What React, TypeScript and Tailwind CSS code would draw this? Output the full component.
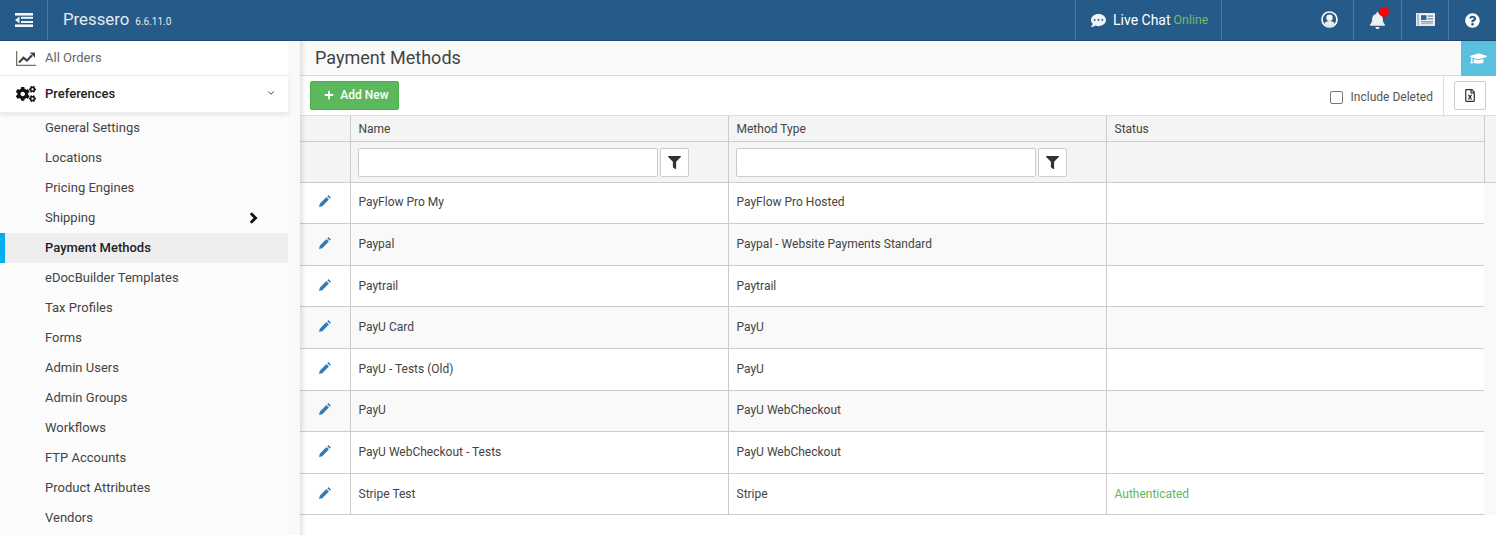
import React from "react";
import { ChevronDown } from "lucide-react";
import { FaCogs, FaCommentDots, FaBell, FaQuestionCircle, FaGraduationCap, FaPlus, FaFilter, FaRegFileExcel } from "react-icons/fa";

const menu = ["General Settings","Locations","Pricing Engines","Shipping","Payment Methods","eDocBuilder Templates","Tax Profiles","Forms","Admin Users","Admin Groups","Workflows","FTP Accounts","Product Attributes","Vendors"];
const rows = [
  { h: "h-[41px]", bg: "bg-white", t: "pb-[3px]", p: "pb-[4px]", c: ["PayFlow Pro My","PayFlow Pro Hosted",""] },
  { h: "h-[42px]", bg: "bg-[#f9f9f9]", t: "pb-[1px]", p: "pb-[3px]", c: ["Paypal","Paypal - Website Payments Standard",""] },
  { h: "h-[41px]", bg: "bg-white", t: "pb-[1px]", p: "pb-[2px]", c: ["Paytrail","Paytrail",""] },
  { h: "h-[42px]", bg: "bg-[#f9f9f9]", t: "pb-[1px]", p: "pb-[3px]", c: ["PayU Card","PayU",""] },
  { h: "h-[42px]", bg: "bg-white", t: "pb-[1px]", p: "pb-[3px]", c: ["PayU - Tests (Old)","PayU",""] },
  { h: "h-[41px]", bg: "bg-[#f9f9f9]", t: "pb-[3px]", p: "pb-[4px]", c: ["PayU","PayU WebCheckout",""] },
  { h: "h-[42px]", bg: "bg-white", t: "pb-[1px]", p: "pb-[3px]", c: ["PayU WebCheckout - Tests","PayU WebCheckout",""] },
  { h: "h-[41px]", bg: "bg-white", t: "pb-[1px]", p: "pb-[2px]", c: ["Stripe Test","Stripe","Authenticated"] },
];

function OutdentIcon() {
  return (
    <svg width="18" height="14" viewBox="0 0 18 14" fill="#f2f5f8">
      <rect x="0" y="0" width="18" height="2.6" />
      <rect x="6" y="3.8" width="12" height="2" />
      <rect x="6" y="8" width="12" height="2" />
      <rect x="0" y="11.4" width="18" height="2.6" />
      <polygon points="0,7 4.5,3.6 4.5,10.4" />
    </svg>
  );
}
function ChartIcon() {
  return (
    <svg width="20" height="15" viewBox="0 0 20 15">
      <path d="M0.6 0V14.3H20" fill="none" stroke="#7d6f60" strokeWidth="1.3" />
      <path d="M3 11.5L7.5 6.8L11 9.6L16 4.3" fill="none" stroke="#444" strokeWidth="2.2" />
      <polygon points="13.8,1.6 19,1.6 19,6.8" fill="#444" />
    </svg>
  );
}
function UserIcon() {
  return (
    <svg width="17" height="17" viewBox="0 0 17 17">
      <defs>
        <clipPath id="usr"><circle cx="8.5" cy="8.5" r="6.6" /></clipPath>
      </defs>
      <circle cx="8.5" cy="8.5" r="7.5" fill="none" stroke="#f4f6f8" strokeWidth="1.7" />
      <circle cx="8.5" cy="6.8" r="3.2" fill="#f4f6f8" />
      <ellipse cx="8.5" cy="14.6" rx="5.6" ry="4.6" fill="#e8edf2" clipPath="url(#usr)" />
    </svg>
  );
}
function NewsIcon() {
  return (
    <svg width="19" height="13" viewBox="0 0 19 13">
      <rect x="0" y="0" width="19" height="13" fill="#e4e9ee" />
      <rect x="1.5" y="1" width="1.2" height="11" fill="#8ea8bf" />
      <rect x="4" y="1" width="14" height="11" fill="#f3f5f7" />
      <rect x="5" y="2.2" width="5.5" height="4.8" fill="#2e6496" />
      <rect x="11.5" y="2.4" width="5.5" height="1.3" fill="#6d8aa5" />
      <rect x="11.5" y="5.2" width="5.5" height="1.3" fill="#6d8aa5" />
      <rect x="5" y="8.2" width="12" height="1.2" fill="#6d8aa5" />
      <rect x="5" y="10.2" width="12" height="1" fill="#8ea8bf" />
    </svg>
  );
}
function PencilIcon() {
  return (
    <svg width="12" height="12" viewBox="0 0 12 12" fill="#337ab7">
      <polygon points="0,12 0.8,8.7 7.4,2.1 9.9,4.6 3.3,11.2" />
      <polygon points="8.3,1.2 9.4,0.1 11.9,2.6 10.8,3.7" />
    </svg>
  );
}
function BoldChevron() {
  return (
    <svg width="9" height="12" viewBox="0 0 9 12">
      <path d="M1.8 1.2L6.6 6L1.8 10.8" fill="none" stroke="#111" strokeWidth="2.8" />
    </svg>
  );
}

function FilterCell() {
  return (
    <div className="flex items-center gap-[2px] pl-[7px]">
      <div className="w-[300px] h-[29px] bg-white border border-[#ccc] rounded-[2px]" />
      <div className="w-[29px] h-[29px] bg-white border border-[#ccc] rounded-[2px] flex items-center justify-center text-[#333]">
        <FaFilter className="w-[13px] h-[13px]" />
      </div>
    </div>
  );
}

export default function App() {
  return (
    <div className="w-[1496px] h-[535px] overflow-hidden flex flex-col bg-[#f9f9f9] text-[12px] text-[#444]" style={{ fontFamily: "Roboto, sans-serif" }}>
      <header className="h-[41px] shrink-0 bg-[#265a88] border-b border-[#1d4a72] flex text-white">
        <div className="w-[48px] border-r border-[#4f7ba1] flex items-center justify-center pb-[1px]"><OutdentIcon /></div>
        <div className="flex-1 flex items-center pl-[15px] gap-[6px] text-[#e4ebf1]">
          <span className="text-[16.8px]">Pressero</span>
          <span className="text-[10px] mt-[3px]">6.6.11.0</span>
        </div>
        <div className="w-[147px] border-l border-r border-[#4f7ba1] flex items-center pl-[14px] gap-[6px]">
          <FaCommentDots className="w-[17px] h-[15px] text-[#f0f3f6]" />
          <span className="text-[14px]">Live Chat</span>
          <span className="text-[12.4px] text-[#6fbf6a] -ml-[3px]">Online</span>
        </div>
        <div className="w-[132px] border-r border-[#4f7ba1] flex items-center justify-end pr-[15px] pb-[1px]">
          <UserIcon />
        </div>
        <div className="w-[48px] border-r border-[#4f7ba1] flex items-center justify-center relative">
          <FaBell className="w-[17px] h-[17px] text-[#f0f0f0]" />
          <span className="absolute top-[7px] left-[25px] w-[10px] h-[10px] rounded-full bg-[#f00]" />
        </div>
        <div className="w-[47px] border-r border-[#4f7ba1] flex items-center justify-center pb-[1px]"><NewsIcon /></div>
        <div className="w-[47px] flex items-center justify-center"><FaQuestionCircle className="w-[15px] h-[15px]" /></div>
      </header>
      <div className="flex flex-1 min-h-0">
        <aside className="w-[288px] shrink-0 bg-[#fcfcfc] mr-[12px]">
          <div className="h-[35px] bg-white border-b border-[#f0f0f0] flex items-center pl-[16px] gap-[9px] text-[13px] text-[#666]">
            <ChartIcon /><span>All Orders</span>
          </div>
          <div className="h-[37px] bg-white border-b border-[#eee] shadow-[0_2px_4px_rgba(0,0,0,0.1)] flex items-center pl-[16px] gap-[9px] text-[13px] font-medium text-[#222] relative">
            <FaCogs className="w-[20px] h-[16px] text-[#111]" /><span>Preferences</span>
            <ChevronDown className="absolute right-[12px] top-[12px] w-[10px] h-[10px]" strokeWidth={2} />
          </div>
          <nav>
            {menu.map((m) => {
              const active = m === "Payment Methods";
              return (
                <div key={m} className={active ? "h-[30px] flex items-center pl-[40px] text-[13px] bg-[#eee] font-medium text-[#222] border-l-[5px] border-[#00aeef]" : "h-[30px] flex items-center pl-[45px] text-[13px] relative text-[#444]"}>
                  {m}
                  {m === "Shipping" && <span className="absolute left-[249px] top-[9px]"><BoldChevron /></span>}
                </div>
              );
            })}
          </nav>
        </aside>
        <main className="flex-1 min-w-0 flex flex-col relative">
          <div className="h-[35px] shrink-0 flex justify-between border-b border-[#ddd] bg-[#fafafa]">
            <h1 className="pl-[15px] text-[18px] leading-[34px] text-[#444]">Payment Methods</h1>
            <div className="w-[35px] h-[35px] bg-[#5bc0de] flex items-center justify-center text-white"><FaGraduationCap className="w-[17px] h-[15px]" /></div>
          </div>
          <div className="h-[40px] shrink-0 bg-white flex items-center justify-between border-b border-[#ddd]">
            <button className="ml-[10px] h-[29px] w-[89px] bg-[#5cb85c] border border-[#4cae4c] rounded-[2px] text-white font-medium flex items-center justify-center gap-[6px] pl-[4px] pb-[2px]">
              <FaPlus className="w-[10px] h-[10px]" /> Add New
            </button>
            <div className="flex items-center h-full">
              <span className="w-[13px] h-[13px] border border-[#767676] rounded-[2px] bg-white mr-[8px] mt-[4px]" />
              <span className="text-[#555] mr-[10px] mt-[2px]">Include Deleted</span>
              <div className="border-l border-[#ddd] h-full flex items-center pl-[10px] pr-[10px]">
                <div className="w-[32px] h-[29px] border border-[#ccc] rounded-[2px] flex items-center justify-center text-[#333]"><FaRegFileExcel className="w-[10px] h-[13px]" /></div>
              </div>
            </div>
          </div>
          <div className="grid grid-cols-[51px_378px_378px_378px_11px] bg-[#f4f4f4]">
            <div className="h-[26px] border-b border-r border-[#ccc]" />
            <div className="h-[26px] border-b border-r border-[#ccc] pl-[7.5px] leading-[26px]">Name</div>
            <div className="h-[26px] border-b border-r border-[#ccc] pl-[7.5px] leading-[26px]">Method Type</div>
            <div className="h-[26px] border-b border-r border-[#ccc] pl-[7.5px] leading-[26px]">Status</div>
            <div className="row-span-2 border-b border-[#ccc]" />
            <div className="h-[41px] border-b border-r border-[#ccc]" />
            <div className="h-[41px] border-b border-r border-[#ccc] flex items-center"><FilterCell /></div>
            <div className="h-[41px] border-b border-r border-[#ccc] flex items-center"><FilterCell /></div>
            <div className="h-[41px] border-b border-r border-[#ccc]" />
          </div>
          <div className="grid grid-cols-[51px_378px_378px_377px] w-[1184px]">
            {rows.map((r) => (
              <React.Fragment key={r.c[0]}>
                <div className={`${r.h} ${r.bg} ${r.p} border-b border-r border-[#ccc] flex items-center justify-center`}><PencilIcon /></div>
                <div className={`${r.h} ${r.bg} ${r.t} border-b border-r border-[#ccc] pl-[7.5px] flex items-center`}>{r.c[0]}</div>
                <div className={`${r.h} ${r.bg} ${r.t} border-b border-r border-[#ccc] pl-[7.5px] flex items-center`}>{r.c[1]}</div>
                <div className={`${r.h} ${r.bg} ${r.t} border-b border-[#ccc] pl-[7.5px] flex items-center text-[#5cb85c]`}>{r.c[2]}</div>
              </React.Fragment>
            ))}
          </div>
          <div className="flex-1 bg-white" />
          <div className="absolute inset-y-0 left-0 w-[6px] bg-linear-to-r from-black/10 to-transparent pointer-events-none" />
        </main>
      </div>
    </div>
  );
}
